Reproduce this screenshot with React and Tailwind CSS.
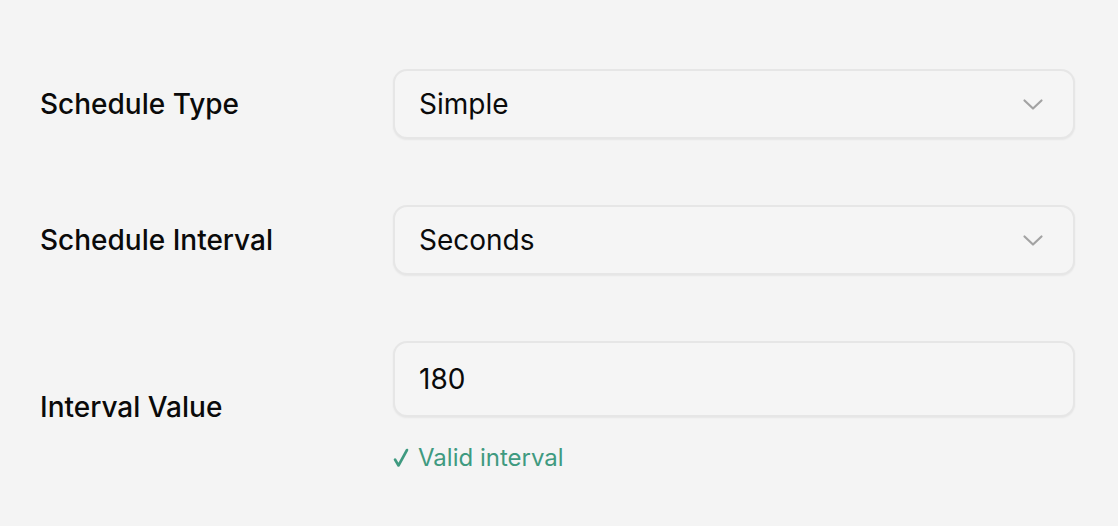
import React from 'react';

const font = { fontFamily: 'Inter, "Noto Sans", sans-serif' };

function Chevron() {
  return (
    <svg width="22" height="13" viewBox="0 0 22 13" fill="none" className="shrink-0">
      <path d="M2.5 2.5 L11 10.5 L19.5 2.5" stroke="#a3a3a3" strokeWidth="2.2" strokeLinecap="round" strokeLinejoin="round" />
    </svg>
  );
}

function Check() {
  return (
    <svg width="16" height="20" viewBox="0 0 16 20" fill="none" className="shrink-0">
      <path d="M2 11.5 L5.5 17.5 L14 2" stroke="#3f9a80" strokeWidth="2.6" strokeLinecap="round" strokeLinejoin="round" />
    </svg>
  );
}

function Select({ value }) {
  return (
    <div className="h-[70px] rounded-[14px] border-2 border-[#e6e6e6] bg-[#f5f5f5] shadow-[0_1px_2px_rgba(0,0,0,0.06)] flex items-center justify-between pl-[24px] pr-[29px]">
      <span className="text-[28px] text-[#0a0a0a]">{value}</span>
      <Chevron />
    </div>
  );
}

export default function App() {
  return (
    <div className="min-h-screen w-full bg-[#f4f4f4] pt-[69px] pl-10 pr-[43px]" style={font}>
      <div className="grid grid-cols-[353px_1fr] gap-y-[66px] items-center">
        <div className="text-[28px] font-medium text-[#0a0a0a]">Schedule Type</div>
        <Select value="Simple" />

        <div className="text-[28px] font-medium text-[#0a0a0a]">Schedule Interval</div>
        <Select value="Seconds" />

        <div className="text-[28px] font-medium text-[#0a0a0a]">Interval Value</div>
        <div>
          <div className="h-[76px] rounded-[14px] border-2 border-[#e6e6e6] bg-[#f5f5f5] shadow-[0_1px_2px_rgba(0,0,0,0.06)] flex items-center pl-[24px]">
            <span className="text-[28px] text-[#0a0a0a]">180</span>
          </div>
          <div className="mt-[26px] flex items-center gap-[9px] text-[24px] leading-[30px] text-[#3f9a80]">
            <Check />
            <span>Valid interval</span>
          </div>
        </div>
      </div>
    </div>
  );
}
